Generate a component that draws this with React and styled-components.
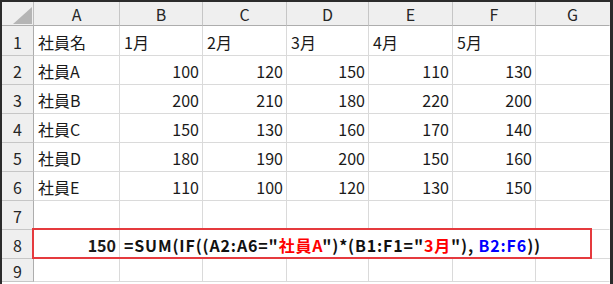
import React from 'react';
import styled, { createGlobalStyle } from 'styled-components';

const GlobalStyle = createGlobalStyle`
  html, body {
    margin: 0;
    padding: 0;
    background: #2b2b2b;
  }
  body {
    font-family: "Noto Sans CJK JP", "Noto Sans", sans-serif;
  }
`;

const COLS = [32, 86, 83, 84, 82, 84, 83, 74];
const ROWS = [24, 30, 29, 29, 29, 29, 29, 29, 29, 23];

const Frame = styled.div`
  width: 608px;
  height: 282px;
  border-style: solid;
  border-color: #2b2b2b;
  border-width: 2px 3px 0 2px;
  background: #ffffff;
  overflow: hidden;
`;

const Sheet = styled.div`
  position: relative;
  display: grid;
  grid-template-columns: ${COLS.map((w) => `${w}px`).join(' ')};
  grid-template-rows: ${ROWS.map((h) => `${h}px`).join(' ')};
`;

const Corner = styled.div`
  position: relative;
  background: #efefef;
  border-right: 1px solid #bdbdbd;
  border-bottom: 1px solid #adadad;
  box-sizing: border-box;

  &::after {
    content: '';
    position: absolute;
    left: 11px;
    top: 5px;
    width: 19px;
    height: 17px;
    background: #b5b5b5;
    clip-path: polygon(100% 0, 100% 100%, 0 100%);
  }
`;

const ColHead = styled.div`
  display: flex;
  align-items: center;
  justify-content: center;
  background: #efefef;
  border-right: 1px solid ${({ last }) => (last ? 'transparent' : '#c6c6c6')};
  border-bottom: 1px solid #adadad;
  box-sizing: border-box;
  color: #262626;
  font-size: 16px;
  padding-top: 1px;
`;

const RowHead = styled.div`
  display: flex;
  align-items: center;
  justify-content: center;
  background: #efefef;
  border-right: 1px solid #adadad;
  border-bottom: 1px solid #c6c6c6;
  box-sizing: border-box;
  color: #262626;
  font-size: 16px;
  padding-top: 2px;
`;

const Cell = styled.div`
  display: flex;
  align-items: center;
  justify-content: ${({ num }) => (num ? 'flex-end' : 'flex-start')};
  padding: 2px 3px 0 4px;
  border-right: 1px solid ${({ last }) => (last ? 'transparent' : '#dadada')};
  border-bottom: 1px solid #dadada;
  box-sizing: border-box;
  color: #1a1a1a;
  font-size: 16px;
  font-weight: ${({ bold }) => (bold ? 700 : 400)};
  white-space: nowrap;
  min-width: 0;
`;

const Overflow = styled(Cell)`
  grid-column: span 6;
  border-right: none;
  overflow: visible;
  padding-left: 4px;
`;

const Formula = styled.span`
  font-weight: 700;
  color: #111;
  letter-spacing: 0.85px;
`;

const Str = styled.span`
  color: ${({ tone }) => (tone === 'blue' ? '#0000ff' : '#ff0000')};
`;

const Highlight = styled.div`
  position: absolute;
  left: 30px;
  top: 226px;
  width: 560px;
  height: 31px;
  border: 2px solid #e53a3e;
  box-sizing: border-box;
  pointer-events: none;
`;

const letters = ['A', 'B', 'C', 'D', 'E', 'F', 'G'];
const months = ['1月', '2月', '3月', '4月', '5月'];
const staff = [
  ['社員A', 100, 120, 150, 110, 130],
  ['社員B', 200, 210, 180, 220, 200],
  ['社員C', 150, 130, 160, 170, 140],
  ['社員D', 180, 190, 200, 150, 160],
  ['社員E', 110, 100, 120, 130, 150],
];

export default function App() {
  return (
    <>
      <GlobalStyle />
      <Frame>
        <Sheet>
          <Corner />
          {letters.map((l, i) => (
            <ColHead key={l} last={i === letters.length - 1}>
              {l}
            </ColHead>
          ))}

          <RowHead>1</RowHead>
          <Cell>社員名</Cell>
          {months.map((m) => (
            <Cell key={m}>{m}</Cell>
          ))}
          <Cell last />

          {staff.map((row, r) => (
            <React.Fragment key={row[0]}>
              <RowHead>{r + 2}</RowHead>
              <Cell>{row[0]}</Cell>
              {row.slice(1).map((v, c) => (
                <Cell key={c} num>
                  {v}
                </Cell>
              ))}
              <Cell last />
            </React.Fragment>
          ))}

          <RowHead>7</RowHead>
          {letters.map((l, i) => (
            <Cell key={l} last={i === letters.length - 1} />
          ))}

          <RowHead>8</RowHead>
          <Cell num bold>
            150
          </Cell>
          <Overflow>
            <Formula>
              =SUM(IF((A2:A6="<Str>社員A</Str>")*(B1:F1="<Str>3月</Str>"), <Str tone="blue">B2:F6</Str>))
            </Formula>
          </Overflow>

          <RowHead>9</RowHead>
          {letters.map((l, i) => (
            <Cell key={l} last={i === letters.length - 1} />
          ))}

          <Highlight />
        </Sheet>
      </Frame>
    </>
  );
}
